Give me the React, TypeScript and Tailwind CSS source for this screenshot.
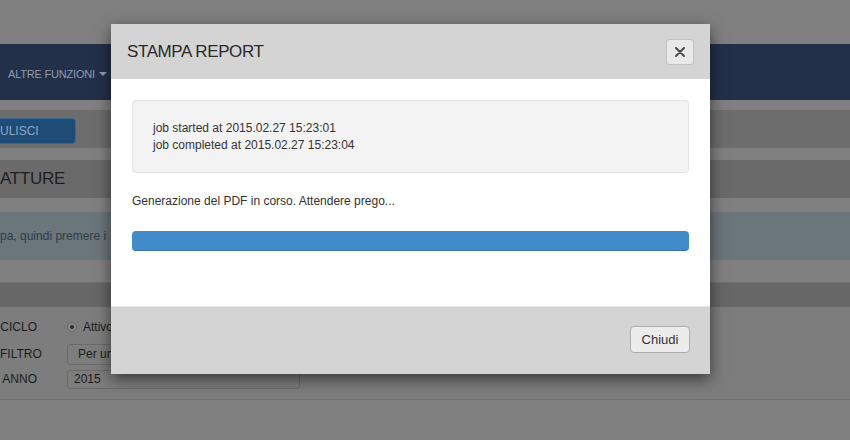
import React from "react";

export default function App() {
  const font = { fontFamily: '"Liberation Sans", Arial, sans-serif' };
  return (
    <div className="relative w-[850px] h-[440px] overflow-hidden bg-[#808080]" style={font}>
      {/* Background page (darkened) */}
      <div className="flex flex-col">
        <div className="h-[44px] bg-[#808080]" />
        <div className="h-[56px] bg-[#22304a] flex items-center pl-[8px]">
          <span className="text-[11px] text-[#8f9bb0] flex items-center gap-[4px] pt-[4px] tracking-[-0.2px]">
            ALTRE FUNZIONI
            <span className="inline-block w-0 h-0 border-l-[4px] border-r-[4px] border-t-[4px] border-l-transparent border-r-transparent border-t-[#8f9bb0]" />
          </span>
        </div>
        <div className="h-[10px] bg-[#808080]" />
        <div className="h-[38px] bg-[#6d6d6d] flex items-center">
          <div className="w-[77px] h-[26px] bg-[#1f4c76] border border-[#3a6892] rounded-r-[4px] flex items-center text-[12px] text-[#8ea8c4] -ml-[1px] mt-[3px]">
            ULISCI
          </div>
        </div>
        <div className="h-[12px] bg-[#808080]" />
        <div className="h-[38px] bg-[#6a6a6a] flex items-center text-[17px] text-[#1e1e1e] tracking-[-0.3px]">ATTURE</div>
        <div className="h-[14px] bg-[#808080]" />
        <div className="h-[48px] bg-[#6b767b] flex items-center text-[12px] text-[#2c3e49]">pa, quindi premere i</div>
        <div className="h-[23px] bg-[#808080] border-b border-[#737373]" />
        <div className="h-[24px] bg-[#676767]" />
        <div className="h-[93px] bg-[#7d7d7d] border-b border-[#6f6f6f] flex flex-col text-[12px] text-[#1c1c1c] pt-[10px]">
          <div className="flex items-center h-[20px]">
            <span className="w-[37px] text-right">CICLO</span>
            <span className="ml-[30px] w-[10px] h-[10px] rounded-full border border-[#6a6a6a] bg-[#8a8a8a] flex items-center justify-center">
              <span className="w-[4px] h-[4px] rounded-full bg-[#2a2a2a]" />
            </span>
            <span className="ml-[6px]">Attivo</span>
          </div>
          <div className="flex items-center h-[22px] mt-[6px]">
            <span className="w-[37px] text-right">FILTRO</span>
            <span className="ml-[30px] w-[60px] h-[21px] border border-[#6a6a6a] rounded-[3px] flex items-center pl-[10px]">Per un</span>
          </div>
          <div className="flex items-center h-[20px] mt-[4px]">
            <span className="w-[37px] text-right">ANNO</span>
            <span className="ml-[30px] w-[233px] h-[19px] border border-[#6a6a6a] rounded-[3px] flex items-center pl-[6px]">2015</span>
          </div>
        </div>
      </div>

      {/* Modal */}
      <div className="absolute left-[111px] top-[24px] w-[599px] h-[350px] flex flex-col shadow-[0_5px_15px_rgba(0,0,0,0.55)]">
        <div className="h-[55px] bg-[#d4d4d4] flex items-center justify-between pl-[16px] pr-[16px]">
          <span className="text-[17px] text-[#2a2a2a] tracking-[-0.4px]">STAMPA REPORT</span>
          <button className="w-[28px] h-[26px] bg-[#e9e9e9] border border-[#c2c2c2] rounded-[3px] flex items-center justify-center">
            <svg width="10" height="10" viewBox="0 0 10 10">
              <path d="M1 1L9 9M9 1L1 9" stroke="#4a4a4a" strokeWidth="2" strokeLinecap="round" />
            </svg>
          </button>
        </div>
        <div className="flex-1 bg-white px-[21px] pt-[21px] flex flex-col">
          <div className="h-[73px] bg-[#f3f3f3] border border-[#e3e3e3] rounded-[4px] pl-[20px] pt-[19px] text-[12px] leading-[17px] text-[#333]">
            <div>job started at 2015.02.27 15:23:01</div>
            <div>job completed at 2015.02.27 15:23:04</div>
          </div>
          <div className="mt-[20px] text-[12px] leading-[17px] text-[#333]">Generazione del PDF in corso. Attendere prego...</div>
          <div className="mt-[21px] h-[20px] bg-[#428bca] rounded-[4px] border-b border-[#3672a8]" />
        </div>
        <div className="h-[68px] bg-[#d4d4d4] border-t border-[#e5e5e5] flex items-start justify-end pr-[20px] pt-[19px]">
          <button className="w-[60px] h-[27px] bg-[#ececec] border border-[#adadad] rounded-[4px] text-[13px] text-[#333]">Chiudi</button>
        </div>
      </div>
    </div>
  );
}
